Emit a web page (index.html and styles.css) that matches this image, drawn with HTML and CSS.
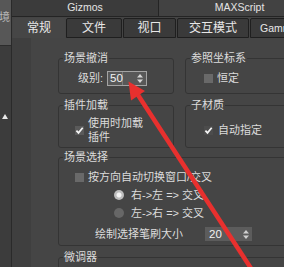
FILE: index.html
```html
<!DOCTYPE html>
<html>
<head>
<meta charset="utf-8">
<link rel="stylesheet" href="styles.css">
</head>
<body>
<div class="app">
  <div class="side">
    <div class="side-top"><span class="side-char">境</span></div>
    <div class="side-bot">
      <svg class="side-tri" width="6" height="5" viewBox="0 0 6 5"><polygon points="3,0 6,5 0,5" fill="#e8e8e8"/></svg>
    </div>
  </div>
  <div class="main">
    <div class="tabs1">
      <div class="tab1 t-giz">Gizmos</div>
      <div class="tab1 t-max">MAXScript</div>
    </div>
    <div class="tabs2">
      <div class="tab2 active w-cg">常规</div>
      <div class="tab2 w-wj">文件</div>
      <div class="tab2 w-sk">视口</div>
      <div class="tab2 w-jh">交互模式</div>
      <div class="tab2 w-gm">Gamma</div>
    </div>
    <div class="page">
      <div class="gutter"></div>
      <div class="content">
        <div class="row">
          <fieldset class="grp g-l">
            <legend>场景撤消</legend>
            <div class="b-a">
              <span class="lbl-lv">级别:</span>
              <div class="spin s50">
                <span class="v">50</span>
                <svg width="6" height="9" viewBox="0 0 6 9"><polygon points="3,0 6,3.5 0,3.5" fill="#d6d6d6"/><polygon points="0,5.5 6,5.5 3,9" fill="#d6d6d6"/></svg>
              </div>
            </div>
          </fieldset>
          <fieldset class="grp g-r">
            <legend>参照坐标系</legend>
            <div class="b-ar">
              <span class="cb"></span>
              <span>恒定</span>
            </div>
          </fieldset>
        </div>
        <div class="row row-b">
          <fieldset class="grp g-l">
            <legend>插件加载</legend>
            <div class="b-bl">
              <span class="cb on"><svg width="9" height="9" viewBox="0 0 9 9"><path d="M1.4 4.6 L3.5 6.9 L7.7 1.8" fill="none" stroke="#f4f4f4" stroke-width="1.7"/></svg></span>
              <span class="wrap">使用时加载插件</span>
            </div>
          </fieldset>
          <fieldset class="grp g-r">
            <legend>子材质</legend>
            <div class="b-br">
              <span class="cb on dark"><svg width="9" height="9" viewBox="0 0 9 9"><path d="M1.4 4.6 L3.5 6.9 L7.7 1.8" fill="none" stroke="#f4f4f4" stroke-width="1.7"/></svg></span>
              <span>自动指定</span>
            </div>
          </fieldset>
        </div>
        <fieldset class="grp g-w g-c">
          <legend>场景选择</legend>
          <div class="b-c">
            <div class="r-cb"><span class="cb"></span><span>按方向自动切换窗口/交叉</span></div>
            <div class="r-rb"><span class="rb sel"></span><span>右-&gt;左 =&gt; 交叉</span></div>
            <div class="r-rb"><span class="rb"></span><span>左-&gt;右 =&gt; 交叉</span></div>
            <div class="r-br">
              <span class="br-lbl">绘制选择笔刷大小</span>
              <div class="spin s20">
                <span class="v">20</span>
                <svg width="6" height="9" viewBox="0 0 6 9"><polygon points="3,0 6,3.5 0,3.5" fill="#cfcfcf"/><polygon points="0,5.5 6,5.5 3,9" fill="#cfcfcf"/></svg>
              </div>
            </div>
          </div>
        </fieldset>
        <fieldset class="grp g-w g-d">
          <legend>微调器</legend>
          <div class="b-d"></div>
        </fieldset>
      </div>
    </div>
  </div>
  <svg class="arrow" width="284" height="267" viewBox="0 0 284 267">
    <line x1="138" y1="95" x2="256" y2="276" stroke="#e8302e" stroke-width="4.5"/>
    <polygon points="128.5,81.5 145,91 131,100.5" fill="#e8302e"/>
  </svg>
</div>
</body>
</html>
```
FILE: styles.css
```css
* { box-sizing: border-box; }
html, body { margin: 0; padding: 0; }
body {
  width: 284px;
  height: 267px;
  overflow: hidden;
  background: #444444;
  font-family: "Liberation Sans", "Noto Sans CJK SC", sans-serif;
  font-size: 11px;
  color: #dcdcdc;
}
.app {
  position: relative;
  display: flex;
  width: 284px;
  height: 267px;
  overflow: hidden;
}
.side {
  width: 12px;
  flex: none;
  display: flex;
  flex-direction: column;
  background: #3c3c3c;
  border-right: 1px solid #2a2a2a;
}
.side-top {
  height: 46px;
  background: #575757;
  border-bottom: 1px solid #2c2c2c;
  padding-top: 9px;
  overflow: hidden;
}
.side-char {
  display: block;
  font-family: "Noto Sans CJK SC", sans-serif;
  font-size: 11px;
  line-height: 14px;
  color: #b8b8b8;
  margin-left: -1px;
}
.side-tri { display: block; margin: 68px 0 0 2px; }
.main {
  flex: 1;
  min-width: 0;
  display: flex;
  flex-direction: column;
  overflow: hidden;
}
.tabs1 { display: flex; height: 17px; flex: none; }
.tab1 {
  flex: none;
  height: 17px;
  border-right: 1px solid #242424;
  border-bottom: 1px solid #242424;
  background: #3b3b3b;
  font-size: 10.5px;
  line-height: 15px;
  text-align: center;
  color: #e4e4e4;
}
.t-giz { width: 147px; }
.t-max { width: 162px; background: #424242; }
.tabs2 {
  display: flex;
  flex: none;
  height: 21px;
  padding: 1px 0 0 1px;
  gap: 1px;
}
.tab2 {
  flex: none;
  height: 20px;
  border: 1px solid #1f1f1f;
  border-radius: 2px 2px 0 0;
  background: #3a3a3a;
  text-align: center;
  font-size: 12px;
  line-height: 18px;
  color: #e8e8e8;
}
.tab2.active { background: #464646; border-color: transparent; }
.w-cg { width: 52px; }
.w-wj { width: 56px; }
.w-sk { width: 53px; }
.w-jh { width: 72px; }
.w-gm { width: 60px; text-align: left; padding-left: 9px; font-size: 10.5px; }
.page { flex: 1; display: flex; min-height: 0; }
.gutter { width: 19px; flex: none; background: #3f3f3f; }
.content {
  flex: 1;
  min-width: 0;
  overflow: hidden;
  padding: 14px 0 0 27px;
  background: #454545;
}
.row { display: flex; gap: 11px; width: 260px; }
.row-b { margin-top: 5px; }
.grp {
  margin: 0;
  padding: 0;
  min-width: 0;
  flex: none;
  border: 1px solid #343434;
  border-radius: 3px;
}
.grp legend {
  margin-left: 4px;
  padding: 0 1px;
  height: 12px;
  font-size: 11px;
  line-height: 12px;
  color: #dcdcdc;
}
.g-l { width: 116px; }
.g-r { width: 133px; }
.g-w { width: 260px; }
.g-c { margin-top: 3px; }
.g-d { margin-top: 5px; }
.b-a {
  display: flex;
  align-items: center;
  height: 29px;
  padding: 7px 0 7px 19px;
}
.lbl-lv { margin-right: 4px; line-height: 15px; }
.b-ar {
  display: flex;
  align-items: center;
  gap: 4px;
  height: 29px;
  padding: 7px 0 7px 18px;
  line-height: 15px;
}
.b-bl {
  display: flex;
  align-items: center;
  gap: 4px;
  padding: 5px 0 3px 16px;
}
.wrap { width: 60px; line-height: 14px; }
.b-br {
  display: flex;
  align-items: center;
  gap: 5px;
  padding: 12px 0 0 18px;
  line-height: 14px;
}
.cb {
  flex: none;
  display: block;
  width: 9px;
  height: 9px;
  background: #696969;
}
.cb.on { background: #5a5a5a; }
.cb.on.dark { background: #4c4c4c; }
.cb svg { display: block; }
.b-c {
  display: flex;
  flex-direction: column;
  padding: 7px 0 4px 0;
}
.r-cb {
  display: flex;
  align-items: center;
  gap: 4px;
  height: 14px;
  padding-left: 16px;
  line-height: 14px;
}
.r-rb {
  display: flex;
  align-items: center;
  gap: 7px;
  height: 14px;
  margin-top: 4px;
  padding-left: 55px;
  line-height: 14px;
}
.rb {
  flex: none;
  display: block;
  width: 10px;
  height: 10px;
  border-radius: 50%;
  background: #676767;
}
.rb.sel { background: radial-gradient(circle, #f4f4f4 0 2px, #bdbdbd 3px); }
.r-br {
  display: flex;
  align-items: center;
  height: 14px;
  margin-top: 7px;
  padding-left: 36px;
  line-height: 14px;
}
.br-lbl { width: 110px; flex: none; }
.b-d { height: 20px; }
.spin {
  flex: none;
  display: flex;
  align-items: center;
  background: #585858;
  color: #f2f2f2;
  font-size: 11.5px;
}
.spin svg { display: block; margin-left: auto; margin-right: 3px; }
.s50 {
  width: 40px;
  height: 15px;
  border: 1px solid #a3a3a3;
}
.s50 .v {
  width: 15px;
  height: 13px;
  line-height: 13px;
  padding-left: 2px;
  border-right: 1px solid #7c7c7c;
}
.s20 {
  width: 47px;
  height: 14px;
  background: #5c5c5c;
}
.s20 .v { padding-left: 4px; line-height: 14px; }
.arrow {
  position: absolute;
  left: 0;
  top: 0;
  pointer-events: none;
}
```
